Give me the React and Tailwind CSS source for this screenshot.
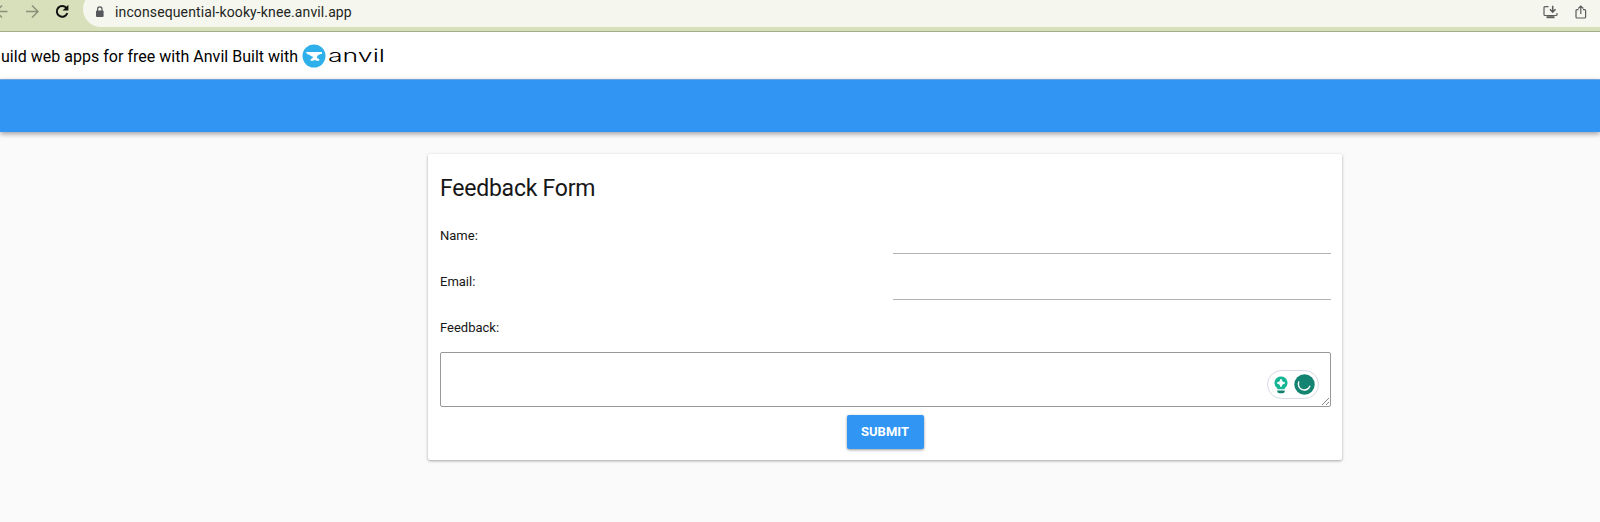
function BrowserBar() {
  return (
    <header className="flex h-8 items-start overflow-hidden border-b border-[#a3ad88] bg-[#d7dfbb]">
      <div className="flex h-[23px] w-[83px] shrink-0 items-center">
        <svg width="83" height="23" viewBox="0 0 83 23" fill="none">
          <path d="M-4 11.5H7.5M2 5.5L-4 11.5L2 17.5" stroke="#8b9179" strokeWidth="1.5" />
          <path d="M26 11.5H37.5M32 5.5L38 11.5L32 17.5" stroke="#8b9179" strokeWidth="1.5" />
          <path d="M66.6 8.2A5.4 5.4 0 1 0 67.3 13.2" stroke="#111" strokeWidth="2" />
          <path d="M68.4 4.8V10.4H62.6Z" fill="#111" />
        </svg>
      </div>
      <div className="-mt-[9px] flex h-9 flex-1 items-center rounded-l-full bg-[#f5f6ee] pt-[5px] pl-[12px]">
        <svg width="10" height="12" viewBox="0 0 10 12" fill="none">
          <rect x="1" y="4.4" width="7.6" height="6.6" rx="1" fill="#55575b" />
          <path d="M2.6 5V3A2.2 2.2 0 0 1 7 3V5" stroke="#55575b" strokeWidth="1.2" />
        </svg>
        <span className="ml-[10px] font-[Roboto] text-[14px] leading-5 tracking-[0.12px] whitespace-nowrap text-[#242522]">
          inconsequential-kooky-knee.anvil.app
        </span>
        <div className="mr-[13px] ml-auto flex items-center gap-[17px]">
          <svg width="15" height="14" viewBox="0 0 15 14" fill="none" stroke="#5b5d5c" strokeWidth="1.2">
            <path d="M5.5 1.6H2Q1 1.6 1 2.6V9.5Q1 10.5 2 10.5H13Q14 10.5 14 9.5V8" />
            <path d="M9.7 .8V6.8M6.9 4.3L9.7 7.1L12.5 4.3" strokeWidth="1.5" />
            <path d="M3.5 12.2H11.5" strokeWidth="2" />
          </svg>
          <svg width="12" height="14" viewBox="0 0 12 14" fill="none" stroke="#5b5d5c" strokeWidth="1.2">
            <path d="M3.5 4.6H2Q1 4.6 1 5.6V12Q1 13 2 13H9.6Q10.6 13 10.6 12V5.6Q10.6 4.6 9.6 4.6H8" />
            <path d="M5.8 9V1.2M3.3 3.5L5.8 1L8.3 3.5" />
          </svg>
        </div>
      </div>
    </header>
  );
}

function AnvilBanner() {
  return (
    <div className="flex h-[47px] items-center bg-white pl-px">
      <span className="w-[297px] pt-[2px] font-[Roboto] text-[16px] leading-6 tracking-[0.02px] whitespace-nowrap text-black">
        uild web apps for free with Anvil Built with
      </span>
      <svg className="ml-[4px] shrink-0" width="24" height="24" viewBox="0 0 24 24">
        <circle cx="12" cy="12" r="11.5" fill="#2fb0ea" />
        <path d="M3.8 8H20V9.8Q15.6 10.6 14.9 13Q15.1 14.7 17.3 15.2V16.7H14.5Q12.9 15.4 11.3 16.7H8.6V15.2Q11 14.6 11 12.7Q9.2 12.2 8 11.2Q5 11 3.8 8Z" fill="white" />
      </svg>
      <span className="ml-[2px] origin-left scale-x-[1.52] pt-px font-[Inter] text-[17.5px] leading-6 font-light text-black">anvil</span>
    </div>
  );
}

function Field({ label }) {
  return (
    <div className="flex h-[46px] items-start justify-between">
      <label className="pt-[7px] text-[13px] leading-5">{label}</label>
      <input aria-label={label} className="h-[35px] w-[438px] border-b border-[#b2b2b2] bg-transparent outline-none" />
    </div>
  );
}

function WritingAssistant() {
  return (
    <div className="absolute top-[17px] right-[11px] flex h-[29px] w-[52px] items-center justify-between rounded-full border border-[#d7dae5] bg-white pr-[3px] pl-[6px]">
      <svg width="14" height="18" viewBox="0 0 14 18">
        <path d="M7 .5A6.5 6.5 0 0 0 3.4 12.4V13.2H10.6V12.4A6.5 6.5 0 0 0 7 .5Z" fill="#16b594" />
        <path d="M7 3.2L8.2 5.8L10.8 7L8.2 8.2L7 10.8L5.8 8.2L3.2 7L5.8 5.8Z" fill="white" stroke="white" />
        <path d="M3.3 14.6H10.7V15.2Q10.7 17.3 8.5 17.3H5.5Q3.3 17.3 3.3 15.2Z" fill="#11826f" />
      </svg>
      <svg width="21" height="21" viewBox="0 0 21 21" fill="none">
        <circle cx="10.5" cy="10.5" r="10.2" fill="#138472" />
        <path d="M4.7 8A5.9 5.9 0 1 0 15.8 12.2" stroke="white" strokeWidth="1.4" strokeLinecap="round" />
      </svg>
    </div>
  );
}

export default function App() {
  return (
    <div className="flex h-[522px] flex-col overflow-hidden bg-[#fafafa] font-[Roboto] text-[#161616]">
      <BrowserBar />
      <AnvilBanner />
      <div className="h-[53px] shrink-0 border-t border-[#6fa5dc] bg-[#3195f4] shadow-[0_2px_5px_rgba(0,0,0,0.36)]" />
      <main className="mt-[22px] ml-[428px] h-[306px] w-[914px] rounded-[2px] bg-white px-3 shadow-[0_1px_3px_rgba(0,0,0,0.35)]">
        <h1 className="pt-[19px] text-[23px] leading-8 tracking-[-0.23px]">Feedback Form</h1>
        <div className="mt-[14px] w-[891px]">
          <Field label="Name:" />
          <Field label="Email:" />
          <div className="h-[42px] pt-[7px] text-[13px] leading-5">Feedback:</div>
        </div>
        <div className="relative -mt-px h-[55px] w-[891px] rounded-[2px] border border-[#999] bg-white">
          <WritingAssistant />
          <svg className="absolute right-0 bottom-0" width="9" height="9" viewBox="0 0 9 9" stroke="#777" strokeWidth="0.9">
            <path d="M1 8L8 1M5 8L8 5" />
          </svg>
        </div>
        <div className="mt-2 flex justify-center">
          <button className="h-[34px] w-[77px] rounded-[2px] bg-[#3195f4] text-[13px] font-bold text-white shadow-[0_1px_3px_rgba(0,0,0,0.4)]">
            SUBMIT
          </button>
        </div>
      </main>
    </div>
  );
}
